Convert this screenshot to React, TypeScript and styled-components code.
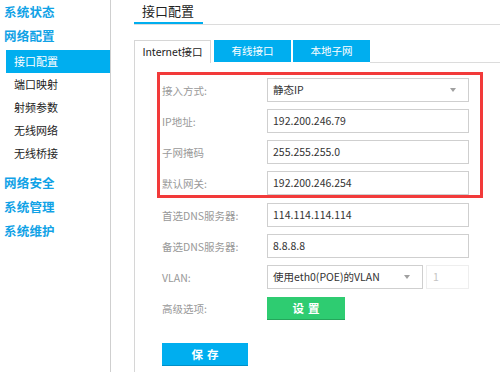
import React from "react";
import styled, { createGlobalStyle } from "styled-components";

const Global = createGlobalStyle`
  html, body { margin: 0; padding: 0; background: #fff; }
  body { font-family: "Noto Sans CJK SC", "Noto Sans", sans-serif; }
  * { box-sizing: border-box; }
`;

const Page = styled.div`
  display: flex;
  width: 500px;
  height: 372px;
  overflow: hidden;
`;

const Sidebar = styled.nav`
  width: 111px;
  flex: none;
  border-right: 1px solid #cfcfcf;
  display: flex;
  flex-direction: column;
`;

const Heading = styled.div<{ $gapBefore?: number }>`
  height: 24px;
  line-height: 24px;
  padding-left: 4px;
  margin-top: ${(p) => p.$gapBefore ?? 0}px;
  font-size: 12.5px;
  font-weight: 700;
  color: #10a2e6;
  letter-spacing: 0.2px;
`;

const SubItem = styled.div<{ $active?: boolean }>`
  height: 23px;
  line-height: 23px;
  margin-left: 6px;
  padding-left: 8px;
  font-size: 11px;
  color: ${(p) => (p.$active ? "#fff" : "#222")};
  background: ${(p) => (p.$active ? "#00aeef" : "transparent")};
`;

const Main = styled.main`
  flex: 1;
  padding-left: 23px;
  display: flex;
  flex-direction: column;
`;

const HeaderBar = styled.div`
  display: flex;
  border-bottom: 1px solid #dcdcdc;
`;

const Title = styled.div`
  height: 24px;
  line-height: 21px;
  padding: 0 9px 0 8px;
  font-size: 13px;
  color: #222;
  border-bottom: 2px solid #00aeef;
`;

const Tabs = styled.div`
  display: flex;
  margin-top: 15px;
  height: 23px;
`;

const Tab = styled.div<{ $active?: boolean; $gap?: number }>`
  width: 77px;
  margin-left: ${(p) => p.$gap ?? 0}px;
  text-align: center;
  font-size: 10.5px;
  line-height: 22px;
  color: ${(p) => (p.$active ? "#222" : "#fff")};
  background: ${(p) => (p.$active ? "#fff" : "#00aeef")};
  border: ${(p) => (p.$active ? "1px solid #d6d6d6" : "none")};
  border-bottom: none;
  margin-bottom: ${(p) => (p.$active ? "0" : "1px")};
`;

const TabLine = styled.div`
  flex: 1;
  border-bottom: 1px solid #dcdcdc;
`;

const Panel = styled.div`
  flex: 1;
  border-left: 1px solid #d6d6d6;
  padding: 9px 0 0 22px;
  display: flex;
  flex-direction: column;
  gap: 7px;
`;

const Highlight = styled.div`
  width: 326px;
  border: 3px solid #f23a3a;
  padding: 3px 11px 0 2px;
  display: flex;
  flex-direction: column;
  gap: 7px;
  margin-bottom: -2px;
`;

const Row = styled.div<{ $indent?: boolean }>`
  display: flex;
  align-items: center;
  height: 24px;
  margin-left: ${(p) => (p.$indent ? 5 : 0)}px;
`;

const Label = styled.div`
  width: 105px;
  font-size: 10.5px;
  color: #999;
`;

const Field = styled.div<{ $width?: number }>`
  width: ${(p) => p.$width ?? 202}px;
  height: 24px;
  border: 1px solid #cfcfcf;
  padding-left: 5px;
  font-size: 10.5px;
  line-height: 22px;
  color: #333;
  display: flex;
  align-items: center;
  justify-content: space-between;
`;

const SmallInput = styled.div`
  width: 43px;
  height: 24px;
  margin-left: 3px;
  border: 1px solid #eeeeee;
  padding-left: 6px;
  font-size: 10.5px;
  line-height: 22px;
  color: #c4c4c4;
`;

const Caret = styled.span`
  width: 0;
  height: 0;
  margin-right: 12px;
  border-left: 3.5px solid transparent;
  border-right: 3.5px solid transparent;
  border-top: 4px solid #a0a0a0;
`;

const Button = styled.div<{ $color: string; $shade: string; $width: number }>`
  width: ${(p) => p.$width}px;
  height: 23px;
  background: ${(p) => p.$color};
  border-bottom: 1px solid ${(p) => p.$shade};
  color: #fff;
  font-size: 11.5px;
  font-weight: 700;
  letter-spacing: 4px;
  text-indent: 4px;
  text-align: center;
  line-height: 22px;
`;

const SaveWrap = styled.div`
  margin: 16px 0 0 5px;
`;

const Select: React.FC<{ value: string; width?: number }> = ({ value, width }) => (
  <Field $width={width}>
    <span>{value}</span>
    <Caret />
  </Field>
);

export default function App() {
  const highlighted = [
    { label: "接入方式:", value: "静态IP", select: true },
    { label: "IP地址:", value: "192.200.246.79" },
    { label: "子网掩码", value: "255.255.255.0" },
    { label: "默认网关:", value: "192.200.246.254" },
  ];
  return (
    <Page>
      <Global />
      <Sidebar>
        <Heading>系统状态</Heading>
        <Heading>网络配置</Heading>
        <SubItem $active style={{ marginTop: 2 }}>接口配置</SubItem>
        <SubItem>端口映射</SubItem>
        <SubItem>射频参数</SubItem>
        <SubItem>无线网络</SubItem>
        <SubItem>无线桥接</SubItem>
        <Heading $gapBefore={6}>网络安全</Heading>
        <Heading>系统管理</Heading>
        <Heading>系统维护</Heading>
      </Sidebar>
      <Main>
        <HeaderBar>
          <Title>接口配置</Title>
        </HeaderBar>
        <Tabs>
          <Tab $active>Internet接口</Tab>
          <Tab $gap={3}>有线接口</Tab>
          <Tab $gap={2}>本地子网</Tab>
          <TabLine />
        </Tabs>
        <Panel>
          <Highlight>
            {highlighted.map((r) => (
              <Row key={r.label}>
                <Label>{r.label}</Label>
                {r.select ? <Select value={r.value} /> : <Field>{r.value}</Field>}
              </Row>
            ))}
          </Highlight>
          <Row $indent>
            <Label>首选DNS服务器:</Label>
            <Field>114.114.114.114</Field>
          </Row>
          <Row $indent>
            <Label>备选DNS服务器:</Label>
            <Field>8.8.8.8</Field>
          </Row>
          <Row $indent>
            <Label>VLAN:</Label>
            <Select value="使用eth0(POE)的VLAN" width={156} />
            <SmallInput>1</SmallInput>
          </Row>
          <Row $indent>
            <Label>高级选项:</Label>
            <Button $color="#2ecc71" $shade="#25a65b" $width={78}>设置</Button>
          </Row>
          <SaveWrap>
            <Button $color="#00aeef" $shade="#0090c8" $width={86}>保存</Button>
          </SaveWrap>
        </Panel>
      </Main>
    </Page>
  );
}
